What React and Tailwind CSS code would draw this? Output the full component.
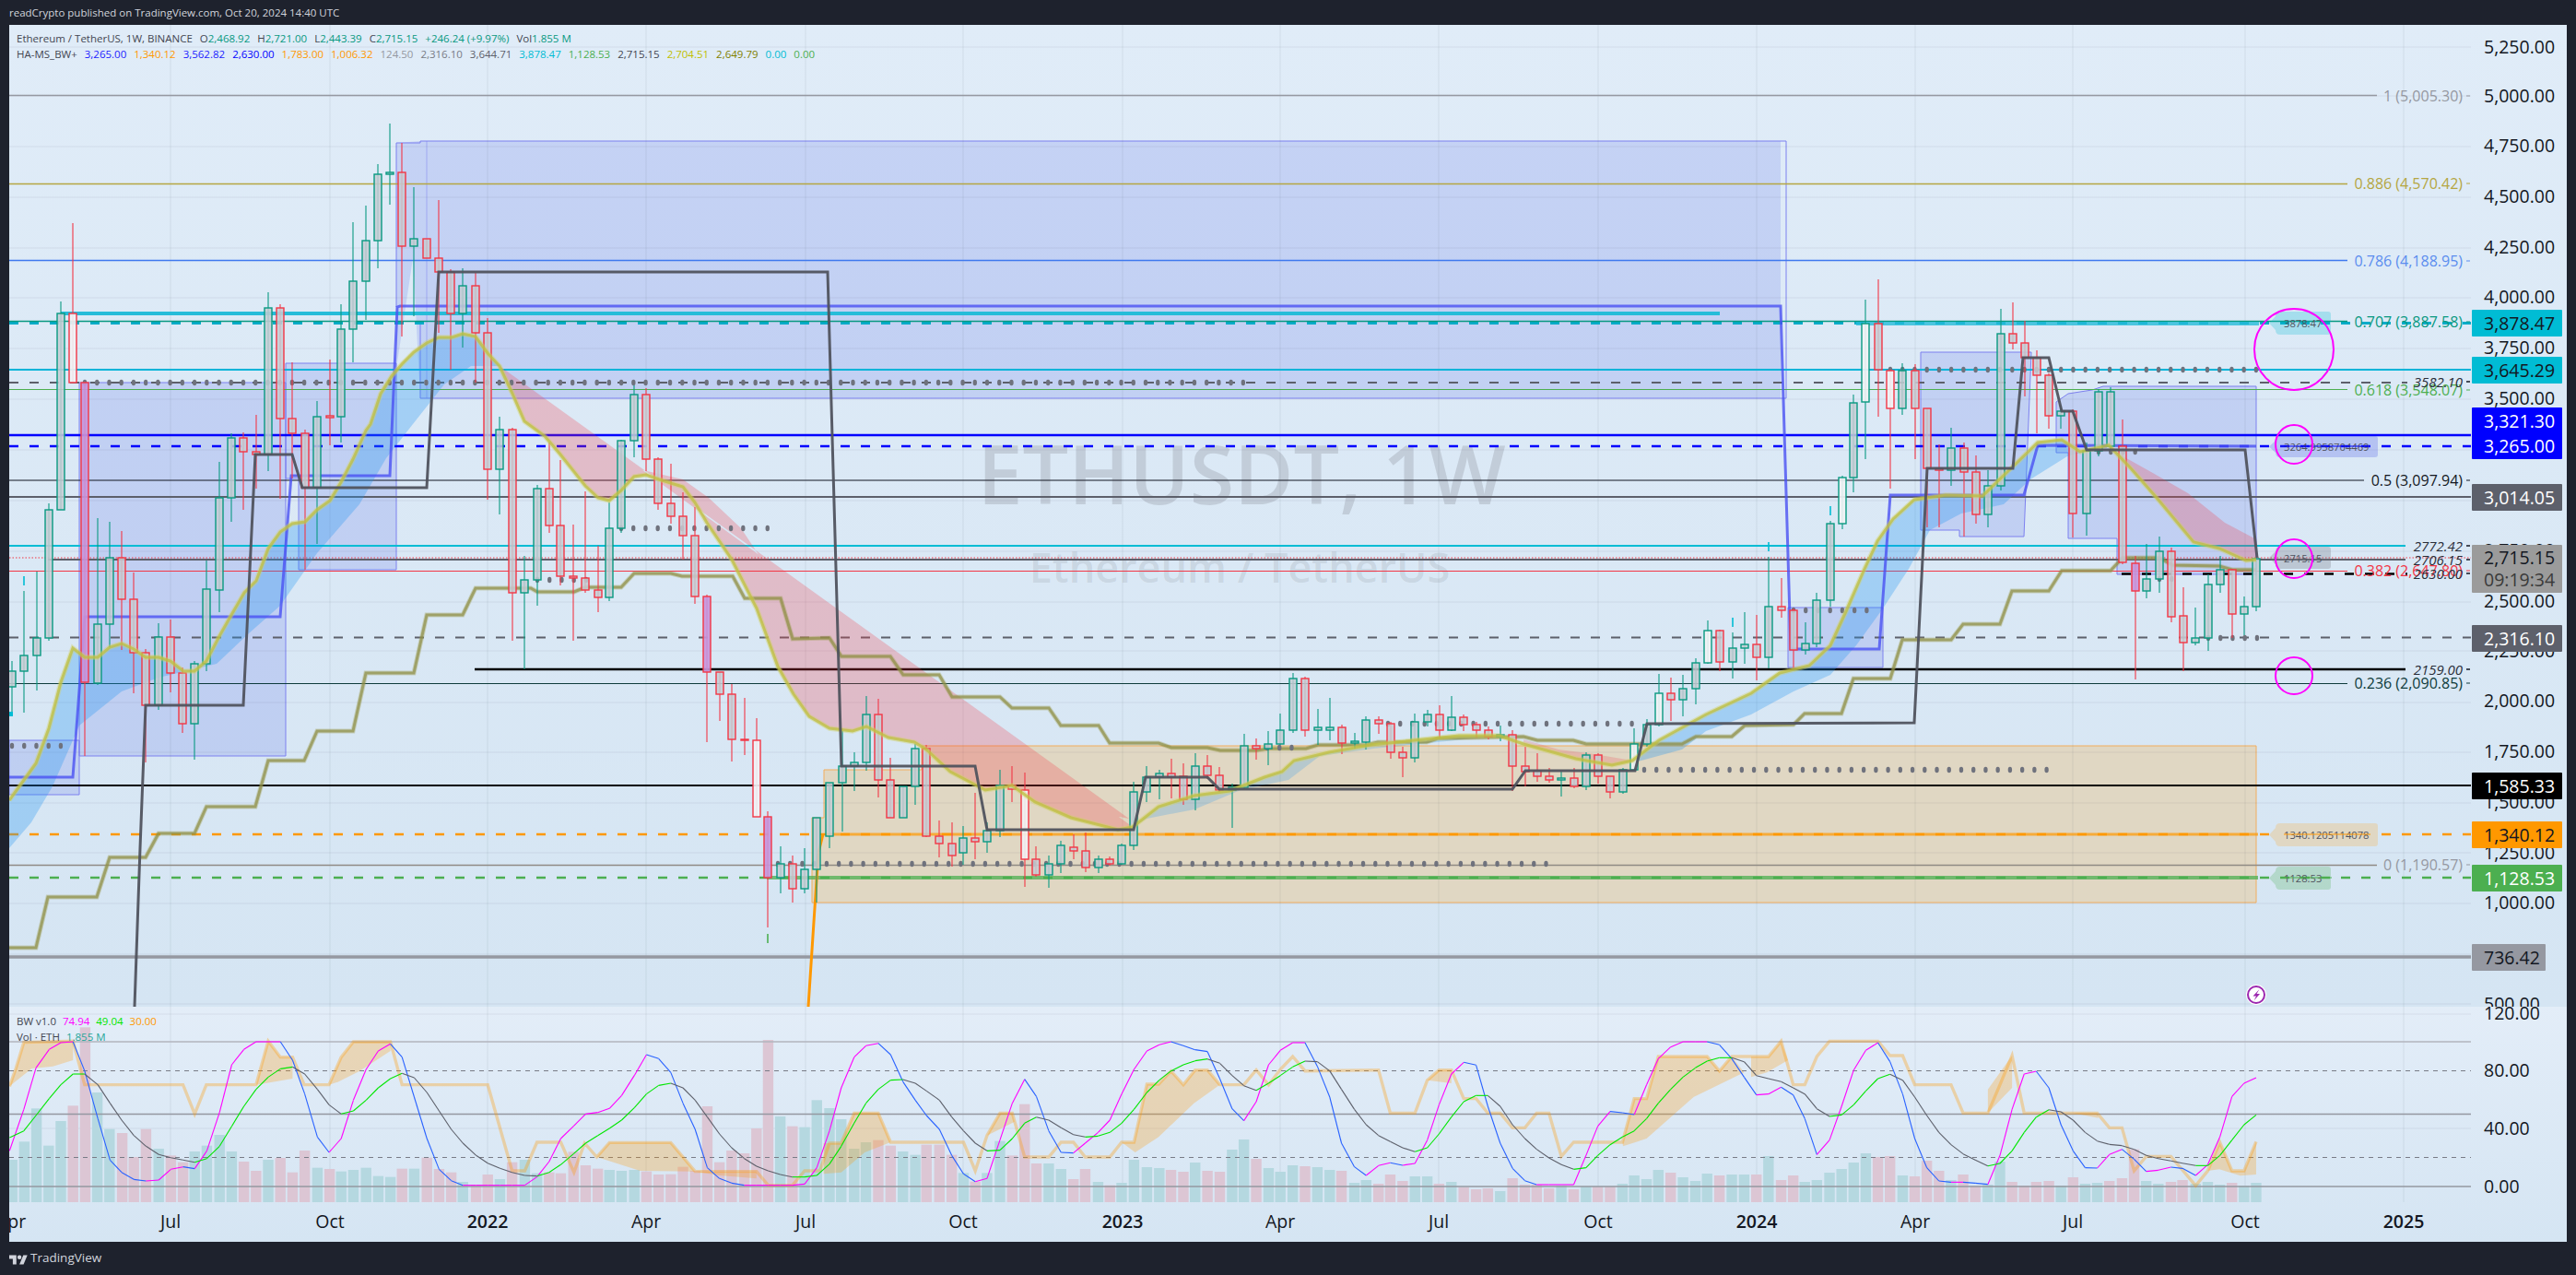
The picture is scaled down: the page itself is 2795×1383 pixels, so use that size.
import React from "react";

const pairs = (a) => { const o = []; for (let i = 0; i < a.length; i += 2) o.push([a[i], a[i + 1]]); return o; };
const z7 = (a) => pairs(a).map(([x, y]) => [x * 0.574, 920 + y / 3]);
const z8 = (a) => pairs(a).map(([x, y]) => [900 + x * 0.6378, 920 + y / 3]);
const z9 = (a) => pairs(a).map(([x, y]) => [1900 + x * 0.5708, 920 + y / 3]);
const P = (pts) => pts.map((p) => p.join(",")).join(" ");

// x, colour, bodyTop, bodyBottom, high, low, fill flag
const CANDLES = [
[13,"g",728,745,717,775],[26,"g",711,728,641,773],[40,"g",692,711,620,749],[53,"g",553,692,546,695],[66,"g",340,553,327,553],[79,"r",340,415,242,415,"w"],[92,"r",415,740,415,820,"p"],[106,"g",677,741,562,743],[119,"g",605,677,566,702],[132,"r",605,650,576,705],[145,"r",650,708,621,752],[158,"r",708,765,704,827],[172,"g",691,765,676,770],[185,"r",691,730,672,751],[198,"r",730,785,724,795],[211,"g",720,785,717,824],[224,"g",639,720,608,728],[238,"g",540,640,501,664],[251,"g",475,540,470,566],[264,"r",475,490,469,553],[278,"r",490,493,450,530],[291,"g",334,493,317,511],[304,"r",334,454,330,541],[317,"r",454,470,393,519],[331,"r",470,529,466,618],[344,"g",452,529,435,590],[358,"r",451,453,390,483],[370,"g",357,452,330,480],[383,"g",305,357,241,393],[397,"g",261,305,223,347],[410,"g",189,261,178,291],[423,"g",187,189,134,222],[436,"r",187,267,155,365],[449,"g",259,267,203,343],[463,"r",259,280,259,280],[476,"r",280,295,217,361],[489,"r",295,340,292,401],[502,"g",310,340,291,377],[516,"r",310,361,296,415],[529,"r",361,509,345,542],[542,"g",466,509,452,558],[556,"r",466,643,464,695],[569,"g",629,643,603,726],[583,"g",530,629,526,657],[596,"r",530,570,480,578],[608,"r",570,625,499,635],[622,"r",625,627,569,695],[635,"r",627,640,533,643],[649,"r",640,648,592,664],[661,"g",573,648,545,652],[674,"g",478,573,477,578],[688,"g",428,478,418,496],[701,"r",428,498,421,511],[714,"r",498,546,496,553],[728,"r",546,560,503,568],[741,"r",560,581,534,607],[754,"r",581,647,550,655],[767,"r",647,729,645,805,"p"],[781,"r",729,753,729,782],[794,"r",753,802,742,826],[808,"r",802,803,757,819],[821,"r",803,886,779,886,"w"],[833,"r",886,952,880,1006,"p"],[847,"g",937,952,918,969],[860,"r",937,964,928,979],[873,"g",943,964,920,969],[886,"g",887,943,887,979],[900,"g",849,907,849,920],[914,"g",831,849,793,902],[927,"g",827,831,816,858],[940,"g",775,827,755,836],[953,"r",775,846,758,865],[966,"r",846,887,822,887],[980,"g",853,887,853,887],[993,"g",812,853,807,873],[1005,"r",812,907,808,908],[1019,"r",907,915,890,930],[1033,"r",915,928,892,940],[1045,"g",909,925,896,938],[1058,"r",909,913,860,932],[1071,"g",901,913,892,925],[1085,"g",852,901,835,908],[1098,"r",852,856,831,870],[1112,"r",857,932,838,962,"w"],[1124,"r",932,949,918,951],[1138,"g",937,949,928,963],[1151,"g",917,937,912,947],[1165,"r",919,923,905,932],[1178,"r",923,941,903,946],[1192,"g",932,941,928,947],[1204,"r",932,937,929,939],[1217,"g",917,937,915,938],[1230,"g",859,917,848,922],[1244,"g",843,859,831,870],[1258,"g",839,843,835,867],[1271,"r",839,843,823,866],[1284,"r",842,867,828,873],[1297,"g",831,867,817,879],[1310,"r",831,841,819,845],[1323,"r",841,857,832,859],[1337,"g",854,857,850,898],[1350,"g",809,854,796,856],[1363,"r",809,812,801,824],[1376,"g",807,812,793,830],[1389,"g",792,807,774,808],[1403,"g",736,792,730,795],[1416,"r",736,792,734,799],[1430,"g",789,792,769,808],[1443,"g",789,792,757,803],[1456,"r",789,806,786,818],[1470,"g",804,806,795,812],[1482,"g",781,805,777,813],[1496,"r",781,785,777,796],[1509,"r",785,816,783,823],[1522,"r",816,822,810,843],[1535,"g",783,822,774,827],[1549,"g",775,783,770,788],[1562,"r",775,792,765,800],[1575,"g",778,792,755,793],[1588,"r",778,786,775,793],[1602,"r",786,792,783,800],[1615,"r",792,799,788,802],[1628,"g",797,799,787,804],[1641,"r",797,831,792,858],[1655,"r",831,837,810,853],[1668,"r",836,842,817,848],[1681,"r",842,846,833,849],[1694,"g",844,846,837,864],[1708,"r",844,853,833,855],[1721,"g",819,853,816,857],[1734,"r",819,842,817,850],[1747,"r",842,859,842,866],[1761,"g",835,859,833,861],[1773,"g",807,835,790,836,"w"],[1787,"g",786,807,780,810],[1800,"g",752,786,731,788,"w"],[1813,"r",752,759,735,782],[1826,"g",747,759,732,777],[1840,"g",719,747,714,764],[1853,"g",684,719,673,720,"w"],[1866,"r",684,718,683,728],[1880,"g",703,718,686,736],[1893,"g",699,703,664,720],[1906,"r",699,713,667,738],[1919,"g",658,713,604,725],[1933,"r",658,662,627,670],[1946,"r",662,705,660,725],[1959,"g",698,705,675,710],[1971,"g",651,698,643,702],[1986,"g",568,651,565,658],[1999,"g",518,568,516,574,"w"],[2011,"g",437,518,428,534],[2024,"g",351,436,325,498,"w"],[2038,"r",351,401,303,452],[2051,"r",402,443,402,530,"w"],[2064,"g",402,443,394,450],[2078,"r",402,443,395,498],[2091,"r",443,508,443,572],[2104,"r",508,510,482,572],[2117,"g",486,510,464,527],[2131,"r",486,512,480,582],[2144,"r",512,558,494,568],[2157,"g",527,558,510,572],[2171,"g",362,527,335,532],[2184,"r",362,372,328,379],[2197,"r",372,388,348,430],[2210,"r",388,407,380,470],[2223,"r",407,451,405,465],[2236,"g",446,451,440,465],[2249,"r",446,557,444,583],[2264,"g",489,557,480,581],[2277,"g",425,489,422,495],[2290,"g",425,484,420,487],[2303,"r",484,610,455,612],[2317,"r",611,641,603,737,"p"],[2329,"g",628,641,590,649],[2343,"g",598,628,582,643],[2356,"r",598,669,594,675],[2369,"r",668,697,637,728],[2382,"g",692,697,659,700],[2396,"g",634,692,623,706],[2409,"g",618,634,603,643],[2422,"r",618,666,617,692],[2435,"g",658,666,647,689],[2448,"g",606,658,606,663],
];

const YELLOW = [[10,868],[39,828],[53,790],[66,740],[79,703],[92,713],[106,713],[119,702],[132,698],[145,704],[158,713],[172,713],[185,717],[199,728],[211,728],[224,717],[238,690],[251,667],[265,643],[278,630],[291,595],[304,577],[317,568],[331,566],[344,553],[358,543],[370,523],[383,498],[397,467],[402,460],[413,427],[425,408],[436,395],[449,382],[463,372],[476,366],[490,366],[502,362],[516,365],[529,383],[542,397],[556,427],[569,457],[591,473],[608,493],[635,527],[649,540],[661,543],[674,532],[688,517],[701,515],[715,520],[741,528],[754,545],[767,567],[794,607],[821,660],[844,723],[861,753],[878,777],[900,790],[925,793],[940,788],[964,800],[992,805],[1005,813],[1031,837],[1069,857],[1098,852],[1123,870],[1162,887],[1213,900],[1229,897],[1257,875],[1296,863],[1334,858],[1372,843],[1391,837],[1404,825],[1442,816],[1487,808],[1544,802],[1583,798],[1627,798],[1653,807],[1710,823],[1749,830],[1771,825],[1800,803],[1851,775],[1900,752],[1931,730],[1963,722],[1986,700],[2003,663],[2023,617],[2037,587],[2054,563],[2077,542],[2111,537],[2151,538],[2183,507],[2211,480],[2237,477],[2257,490],[2288,483],[2311,507],[2340,540],[2380,588],[2408,595],[2437,608],[2448,607]];
const yBetween = (a, b) => YELLOW.filter(([x]) => x >= a && x <= b);

const OLIVE = [[10,1028],[39,1028],[52,973],[105,973],[119,930],[158,930],[172,904],[211,904],[224,875],[277,875],[291,825],[330,825],[344,793],[383,793],[397,730],[449,730],[463,667],[502,667],[516,638],[576,638],[583,642],[623,642],[635,637],[674,637],[688,622],[728,622],[740,625],[795,625],[808,649],[847,649],[860,693],[900,692],[913,712],[966,712],[980,732],[1019,732],[1033,756],[1085,756],[1098,768],[1138,768],[1151,787],[1192,787],[1204,806],[1257,806],[1271,811],[1310,811],[1324,814],[1363,814],[1377,812],[1417,812],[1430,808],[1482,808],[1495,805],[1548,805],[1560,801],[1653,799],[1668,803],[1707,803],[1721,807],[1825,807],[1840,799],[1879,799],[1893,787],[1946,786],[1958,774],[1998,774],[2011,736],[2051,736],[2064,694],[2117,694],[2130,677],[2170,677],[2183,641],[2223,641],[2237,619],[2290,619],[2303,605],[2343,605],[2357,613],[2408,614],[2422,618],[2448,618]];
const DARK = [[146,1092],[152,920],[158,765],[264,765],[277,493],[317,493],[328,529],[463,529],[476,295],[898,295],[913,831],[1058,831],[1071,900],[1230,900],[1243,843],[1310,843],[1323,856],[1641,856],[1655,836],[1774,836],[1787,785],[2077,784],[2091,508],[2184,508],[2195,388],[2223,388],[2237,446],[2249,446],[2264,488],[2436,488],[2449,605]];
const BLUESTEP = [[10,843],[79,843],[92,669],[304,669],[316,516],[423,516],[431,333],[434,332],[1932,332],[1943,704],[2039,704],[2051,537],[2196,537],[2211,483],[2448,484]];

const BLUEBAND1 = [...yBetween(10, 542), [511,397],[482,417],[448,460],[419,497],[390,547],[344,600],[304,657],[270,687],[235,720],[172,735],[132,750],[86,787],[57,853],[34,892],[10,920]];
const BLUEBAND2 = [...yBetween(1229, 1627),[1560,805],[1490,812],[1432,820],[1398,846],[1346,857],[1296,878],[1244,888]];
const BLUEBAND3 = [...yBetween(1771, 2288),[2243,495],[2203,520],[2174,547],[2128,557],[2094,575],[2071,617],[2043,660],[2014,700],[1986,732],[1946,750],[1900,775],[1851,793],[1825,813],[1773,827]];
const REDBAND1 = [...yBetween(542, 1229).reverse(),[1225,888],[1174,878],[1123,857],[1072,833],[1028,808],[977,780],[926,753],[900,723],[861,660],[832,615],[804,573],[769,540],[741,520],[689,508],[660,498],[623,460],[580,425],[542,397]];
const REDBAND2 = [...yBetween(1653, 1771),[1730,818],[1691,813],[1653,802]];
const REDBAND3 = [...yBetween(2288, 2448),[2448,585],[2414,567],[2374,535],[2334,512],[2300,493]];

const BOXES = [
  [[10,803],[86,803],[86,862],[10,862]],
  [[86,415],[310,415],[310,820],[86,820]],
  [[310,394],[430,394],[430,618],[324,618],[324,519],[310,519]],
  [[1940,659],[2043,659],[2043,724],[1940,724]],
  [[2084,382],[2204,382],[2196,582],[2126,582],[2126,575],[2084,575]],
  [[2231,436],[2244,427],[2270,423],[2282,419],[2448,419],[2448,623],[2297,623],[2297,584],[2244,584],[2244,491],[2231,491]],
];
const BIGBOX_FILL = [[430,155],[456,153],[1932,153],[1932,432],[456,432],[448,280],[430,400]];
const BIGBOX_EDGE = [[430,333],[430,155],[456,155],[456,153],[1938,153],[1938,432],[456,432],[456,350]];
const TAN = [[881,979],[881,887],[894,887],[894,835],[1000,835],[1000,809],[2448,809],[2448,979]];

const PRICES = [["5,250.00",51],["5,000.00",104],["4,750.00",158],["4,500.00",213],["4,250.00",268],["4,000.00",322],["3,750.00",377],["3,500.00",432],["3,250.00",488],["3,000.00",542],["2,750.00",597],["2,500.00",652],["2,250.00",706],["2,000.00",760],["1,750.00",815],["1,500.00",870],["1,250.00",925],["1,000.00",979],["750.00",1034],["500.00",1089]];
const GRID_Y = [51,104,159,214,269,323,378,433,488,543,598,653,706,762,816,871,925,980,1035,1089];
const GRID_X = [185,358,529,701,874,1045,1218,1389,1561,1734,1906,2078,2249,2436,2608];
const TAGS = [
  ["3,878.47",336,"bg-[#00bcd4]","text-[#131722]"],
  ["3,645.29",387,"bg-[#00bcd4]","text-[#131722]"],
  ["3,321.30",442,"bg-[#0000ff]","text-white"],
  ["3,265.00",469,"bg-[#0000ff]","text-white"],
  ["3,014.05",525,"bg-[#5d606b]","text-white"],
  ["2,316.10",678,"bg-[#5d606b]","text-white"],
  ["1,585.33",838,"bg-black","text-white"],
  ["1,340.12",891,"bg-[#ff9800]","text-[#131722]"],
  ["1,128.53",938,"bg-[#4caf50]","text-white"],
];
const TIMES = [["Apr",12,0],["Jul",185,0],["Oct",358,0],["2022",529,1],["Apr",701,0],["Jul",874,0],["Oct",1045,0],["2023",1218,1],["Apr",1389,0],["Jul",1561,0],["Oct",1734,0],["2024",1906,1],["Apr",2078,0],["Jul",2249,0],["Oct",2436,0],["2025",2608,1]];

const VOL7 = [23,1014,46,955,69,847,92,968,115,888,138,-838,161,-583,184,795,207,914,231,-927,253,-1005,276,-914,300,978,323,-1000,346,-1022,368,987,391,968,415,933,438,987,461,-1020,484,-1050,507,1014,530,-1008,553,-1055,576,-984,600,1040,623,-1044,645,1052,668,1047,692,1040,715,1067,738,1070,760,-1043,783,1043,807,-1007,830,-1044,853,-1055,875,1086,900,-1095,922,-1062,945,1077,968,-1022,992,1014,1015,1058,1038,-1055,1060,-1058,1084,-988,1107,-1032,1130,-1043,1152,1047,1175,1050,1199,1047,1222,-1052,1245,-1062,1268,-1061,1291,-1037,1314,-1050,1337,-840,1360,-1022,1383,-984,1407,-993,1430,-912,1452,-624,1475,873,1498,-905,1521,908,1544,820];
const VOL8 = [0,846,20,882,42,978,62,957,83,-950,104,-968,125,987,146,998,165,-965,187,-965,208,-998,228,1057,248,-1085,268,1057,290,953,311,-1000,332,-833,352,-1026,373,1026,394,1044,415,-1077,435,-1044,457,1086,477,-1097,497,1089,518,1014,540,1038,561,1041,581,-1047,602,-1053,622,1023,643,-1050,664,-1053,685,981,705,948,726,-1011,747,1041,767,1053,788,1032,809,-1035,830,1038,851,1047,871,-1050,893,1089,913,1080,934,-1092,954,-1062,975,-1083,996,1068,1017,1068,1037,-1092,1058,1086,1079,-1104,1100,-1110,1120,-1107,1141,1116,1162,-1074,1183,-1095,1203,-1095,1224,-1107,1245,1098,1266,-1110,1287,1101,1307,-1101,1328,-1101,1349,1092,1369,1065,1390,1077,1410,1047,1431,-1056,1452,1071,1473,1083,1493,1059,1514,-1065,1535,1062,1556,1062];
const VOL9 = [10,-1062,33,1002,57,-1080,80,-1065,102,1086,125,1080,149,1056,172,1044,195,1023,218,993,241,-1005,264,-1002,288,1065,311,-1068,334,-1017,357,-1050,380,1080,403,-1062,426,-1098,450,1095,473,1020,496,-1086,519,-1098,542,-1086,566,-1083,589,1098,612,-1071,635,1092,658,1089,681,-1083,705,-1074,728,-980,751,1083,774,1092,798,-1086,820,-1080,845,1092,868,1086,891,1095,914,-1089,937,1098,960,1089];

const KLINE = [
  ...z7([18,985,45,850,68,715,93,655,115,633,138,630,160,725,185,880,208,1015,230,1055,253,1078,276,1083,300,1080,323,1045,346,1037,368,1043,391,985,415,860,438,705,461,655,484,630,507,630,530,630,553,690,576,800,600,940,622,990,645,945,668,820,692,720,715,660,738,637,760,680,783,810,807,945,830,1045,853,1082,875,1097,900,1097,922,1097,945,1097,968,1097,992,1097,1015,1070,1038,1020,1060,945,1084,905,1107,865,1130,860,1152,847,1175,805,1199,740,1222,672,1245,685,1268,730,1291,830,1314,915,1337,1040,1360,1075,1383,1090,1407,1097,1430,1097,1452,1097,1475,1097,1498,1097,1521,1093,1544,1040]),
  ...z8([0,920,20,780,42,680,62,643,83,635,104,672,125,760,146,820,165,870,187,915,208,1000,228,1060,248,1085,268,1075,290,950,311,830,332,752,352,808,373,920,394,990,415,992,435,960,457,925,477,885,497,800,518,720,540,660,561,640,581,630,602,643,622,656,643,662,664,750,685,848,705,887,726,825,747,705,767,658,788,633,809,633,830,710,851,810,871,960,893,1037,913,1065,934,1033,954,1024,975,1032,996,1026,1017,950,1037,835,1058,735,1079,697,1100,706,1120,840,1141,960,1162,1042,1183,1082,1203,1095,1224,1095,1245,1095,1266,1095,1287,1000,1307,905,1328,857,1349,861,1369,867,1390,770,1410,685,1431,647,1452,630,1473,630,1493,630,1514,640,1535,685,1556,745]),
  ...z9([10,803,33,800,57,778,80,803,102,880,125,997,149,950,172,840,195,722,218,658,241,633,264,695,288,800,311,945,334,1040,357,1083,380,1087,403,1087,426,1090,450,1094,473,1000,496,850,519,735,542,726,566,780,589,900,612,985,635,1040,658,1041,681,997,705,980,728,1012,751,1052,774,1048,798,1038,820,1042,845,1065,868,1030,891,940,914,808,937,765,960,747]),
];
const DLINE = [
  ...z7([18,942,45,920,68,870,93,815,115,770,138,735,160,735,185,770,208,830,230,885,253,935,276,970,300,997,323,1007,346,1015,368,1022,391,1010,415,970,438,905,461,840,484,785,507,745,530,718,553,712,576,735,600,785,622,835,645,865,668,855,692,820,715,780,738,750,760,733,783,747,807,795,830,855,853,915,875,960,900,1000,922,1025,945,1042,968,1055,992,1065,1015,1067,1038,1055,1060,1030,1084,995,1107,960,1130,935,1152,912,1175,885,1199,845,1222,800,1245,772,1268,765,1291,780,1314,820,1337,875,1360,930,1383,975,1407,1010,1430,1035,1452,1050,1475,1062,1498,1070,1521,1070,1544,1065]),
  ...z8([0,1028,20,970,42,895,62,830,83,785,104,755,125,753,146,765,165,790,187,820,208,875,228,920,248,960,268,985,290,983,311,945,332,895,352,875,373,885,394,910,415,932,435,940,457,937,477,925,497,895,518,850,540,795,561,755,581,725,602,705,622,692,643,686,664,700,685,740,705,773,726,788,747,765,767,740,788,712,809,693,830,695,851,725,871,785,893,850,913,900,934,935,954,955,975,975,996,988,1017,975,1037,930,1058,875,1079,825,1100,805,1120,805,1141,840,1162,900,1183,945,1203,980,1224,1008,1245,1030,1266,1045,1287,1040,1307,1000,1328,965,1349,940,1369,920,1390,880,1410,830,1431,785,1452,745,1473,715,1493,693,1514,682,1535,682,1556,695]),
  ...z9([10,740,33,750,57,760,80,780,102,800,125,848,149,873,172,868,195,835,218,790,241,750,264,736,288,755,311,810,334,870,357,925,380,965,403,995,426,1015,450,1034,473,1026,496,985,519,925,542,875,566,851,589,858,612,885,635,925,658,953,681,964,705,968,728,980,751,1000,774,1010,798,1018,820,1025,845,1033,868,1033,891,1000,914,950,937,900,960,868]),
];
const ORANGE = [
  ...z7([18,775,30,717,45,632,138,628,160,770,346,770,368,865,390,770,484,770,507,628,530,680,553,680,575,770,622,770,645,680,668,630,738,630,760,770,922,770,968,1050,992,1050,1015,957,1060,957,1085,1055,1105,960,1128,1005,1152,958,1268,958,1314,1052,1430,1052,1452,1097,1498,1097,1521,1050,1550,1050]),
  ...z8([0,960,20,960,42,862,83,862,104,957,228,957,248,1050,268,935,290,862,311,862,332,1005,373,1005,394,957,415,957,435,1005,477,1005,497,957,518,957,540,768,560,768,581,725,602,770,622,722,643,722,664,770,705,770,726,722,747,770,767,720,788,678,809,725,934,722,954,862,996,862,1017,755,1037,722,1058,722,1079,815,1100,815,1120,862,1141,862,1162,910,1183,910,1203,862,1224,862,1245,1003,1266,957,1349,957,1369,815,1390,815,1410,678,1493,678,1514,725,1535,678]),
  ...z9([0,678,33,678,57,628,80,770,102,770,125,678,149,628,241,628,264,675,288,675,311,770,380,770,403,862,450,862,473,770,496,675,519,862,658,862,681,910,705,910,728,1050,751,1003,798,1003,845,1098,868,1050,891,957,914,1050,937,1050,960,955]),
];
const AREAS = [
  z7([18,775,30,717,45,632,138,628,138,690,100,710,60,717]),
  z7([484,770,507,628,530,680,553,680,553,750]),
  z7([622,770,645,680,668,630,738,630,738,660,680,725,640,760]),
  z7([1128,1005,1152,958,1268,958,1314,1052,1210,1050]),
  z7([1314,1052,1430,1052,1430,1075,1360,1065]),
  z8([-10,960,20,960,42,862,83,862,104,957,60,990,20,1055,-10,1060]),
  z8([268,935,290,862,311,862,315,890]),
  z8([497,957,518,957,540,768,560,768,581,725,602,770,622,722,643,722,664,770,620,830,560,940,520,990]),
  z8([1017,755,1037,722,1058,722,1058,765]),
  z8([1349,957,1369,815,1390,815,1410,678,1493,678,1514,725,1535,678,1556,730,1470,810,1390,945,1350,970]),
  z9([0,678,33,678,57,628,70,690,30,730,0,745]),
  z9([450,862,450,785,496,675,496,780]),
  z9([612,862,658,862,660,878]),
  z9([868,1050,891,957,914,1050,937,1050,960,955,960,1062,930,1066,890,1045]),
];

const Segs = ({ pts, up, down, width = 1.1 }) =>
  pts.slice(1).map((p, i) => (
    <line key={i} x1={pts[i][0]} y1={pts[i][1]} x2={p[0]} y2={p[1]} stroke={p[1] <= pts[i][1] ? up : down} strokeWidth={width} />
  ));

const Dots = ({ a, b, y }) => {
  const out = [];
  for (let x = a; x <= b; x += 13.23) out.push(<ellipse key={x} cx={x} cy={y} rx="2.2" ry="3.2" fill="#6f727d" />);
  return out;
};

const HL = ({ y, a = 10, b = 2681, c, w = 1, d, o = 1 }) => <line x1={a} x2={b} y1={y} y2={y} stroke={c} strokeWidth={w} strokeDasharray={d} strokeOpacity={o} />;

const Candle = ({ d }) => {
  const [x, c, t, b, hi, lo, f] = d;
  const col = c === "g" ? "#089981" : "#f23645";
  const fill = f === "p" ? "#c695dc" : f === "w" ? "#f1f3f5" : "#c6cdd4";
  return (
    <g>
      <line x1={x} x2={x} y1={hi} y2={lo} stroke={col} strokeWidth="1.1" />
      <rect x={x - 4} y={t} width="8" height={Math.max(b - t, 1)} fill={fill} fillOpacity={f ? 0.9 : 0.85} stroke={col} strokeWidth="1.4" />
    </g>
  );
};

const Bubble = ({ x2, y1, y2, fill, o = 0.25, label }) => {
  const m = (y1 + y2) / 2;
  return (
    <g>
      <path d={`M2462 ${m} L2469 ${y1 + 5} Q2469 ${y1} 2474 ${y1} L${x2 - 3} ${y1} Q${x2} ${y1} ${x2} ${y1 + 3} L${x2} ${y2 - 3} Q${x2} ${y2} ${x2 - 3} ${y2} L2474 ${y2} Q2469 ${y2} 2469 ${y2 - 5} Z`} fill={fill} fillOpacity={o} />
      <text x="2478" y={m} fontSize="11.2" fill="#50535e" dominantBaseline="central">{label}</text>
    </g>
  );
};

const Fib = ({ y, label, c, right = 2672 }) => (
  <g>
    <text x={right} y={y} fontSize="16" fill={c} textAnchor="end" dominantBaseline="central">{label}</text>
    <line x1="2676" x2="2680" y1={y} y2={y} stroke={c} strokeWidth="1" />
  </g>
);
const Lvl = ({ y, label }) => (
  <g>
    <text x="2672" y={y} fontSize="15" fontStyle="italic" fill="#2a2e39" textAnchor="end" dominantBaseline="central">{label}</text>
    <line x1="2676" x2="2680" y1={y} y2={y} stroke="#131722" strokeWidth="1.5" />
  </g>
);

const Val = ({ c, children }) => <span className={c}>{children}</span>;

function PriceSvg() {
  return (
    <svg viewBox="10 27 2671 1065" className="absolute inset-0 w-full h-full font-['Open_Sans',sans-serif]">
      <text x="1347" y="547" fontSize="88" fontWeight="600" fill="#5d606b" fillOpacity="0.2" textAnchor="middle">ETHUSDT, 1W</text>
      <text x="1345" y="632" fontSize="45" fontWeight="600" fill="#5d606b" fillOpacity="0.15" textAnchor="middle">Ethereum / TetherUS</text>

      <polygon points={P(TAN)} fill="#e0d7c3" stroke="#f2ad5c" strokeWidth="1" />
      <polygon points={P(BIGBOX_FILL)} fill="#3f51e6" fillOpacity="0.16" />
      <polyline points={P(BIGBOX_EDGE)} fill="none" stroke="#7d80ef" strokeWidth="1" />
      <line x1="463" x2="463" y1="153" y2="432" stroke="#7d80ef" strokeOpacity="0.5" strokeWidth="1" />
      {BOXES.map((b, i) => <polygon key={i} points={P(b)} fill="#3f51e6" fillOpacity="0.16" stroke="#7d80ef" strokeWidth="1" />)}
      {GRID_Y.map((y) => <line key={y} x1="10" x2="2681" y1={y} y2={y} stroke="#2a2e39" strokeOpacity="0.07" strokeWidth="1.2" />)}
      {GRID_X.map((x) => <line key={x} x1={x} x2={x} y1="27" y2="1092" stroke="#2a2e39" strokeOpacity="0.08" strokeWidth="1" />)}

      <HL y={103.5} b={2579} c="#9598a1" w={1.5} />
      <HL y={199.5} b={2547} c="#b5a642" w={1.3} />
      <HL y={282.5} b={2547} c="#3f79ee" w={1.3} />
      <HL y={350.5} c="#00acc8" w={3} d="10 12" />
      <HL y={348.5} b={2547} c="#089981" w={1.3} />
      <HL y={340} a={66} b={1866} c="#26bcd9" w={4} />
      <HL y={351} a={2014} b={2451} c="#26bcd9" w={4} o={0.8} />
      <HL y={401} c="#00b4d8" w={2} />
      <HL y={415} a={10} b={2612} c="#5d606b" w={2.2} d="10 12" />
      <HL y={422.5} b={2547} c="#4caf50" w={1.2} />
      <HL y={472} c="#0000ff" w={2.4} />
      <HL y={484} c="#0000ff" w={2.6} d="10 12" />
      <HL y={521} b={2565} c="#131722" w={1.2} />
      <HL y={539} c="#5d606b" w={2.2} />
      <HL y={592} b={2610} c="#00bcd4" w={2.2} />
      <HL y={605} c="#f23645" w={1} d="1.5 2" />
      <HL y={607} a={52} b={2610} c="#5d606b" w={2.2} />
      <HL y={619.5} b={2547} c="#f23645" w={1.2} />
      <HL y={622.5} a={2302} b={2612} c="#000000" w={2.4} d="10 12" />
      <HL y={691.5} c="#5d606b" w={2.2} d="10 12" />
      <HL y={726} a={515} b={2610} c="#000000" w={2.4} />
      <HL y={741.5} b={2547} c="#0d3b3b" w={1.2} />
      <HL y={852} c="#000000" w={2.2} />
      <HL y={905} c="#ff9800" w={2.4} d="10 12" />
      <HL y={905} a={900} b={2450} c="#ff9800" w={3} o={0.7} />
      <HL y={938.5} b={2579} c="#8f8a84" w={1.3} />
      <HL y={952} c="#4caf50" w={2.4} d="10 12" />
      <HL y={952} a={832} b={2450} c="#4caf50" w={4} o={0.75} />
      <HL y={1038} c="#9598a1" w={3.4} />

      <polygon points={P(BLUEBAND1)} fill="#2196f3" fillOpacity="0.3" />
      <polygon points={P(BLUEBAND2)} fill="#2196f3" fillOpacity="0.22" />
      <polygon points={P(BLUEBAND3)} fill="#2196f3" fillOpacity="0.3" />
      <polygon points={P(REDBAND1)} fill="#f23645" fillOpacity="0.25" />
      <polygon points={P(REDBAND2)} fill="#f23645" fillOpacity="0.2" />
      <polygon points={P(REDBAND3)} fill="#f23645" fillOpacity="0.25" />

      <polyline points={P(OLIVE)} fill="none" stroke="#9d9d50" strokeOpacity="0.35" strokeWidth="5" />
      <polyline points={P(OLIVE)} fill="none" stroke="#8e8e45" strokeOpacity="0.7" strokeWidth="3" />
      <polyline points={P([[877,1092],[883,1000],[888,925],[893,905]])} fill="none" stroke="#ff9800" strokeWidth="3" />
      <polyline points={P(BLUESTEP)} fill="none" stroke="#4a50f2" strokeOpacity="0.8" strokeWidth="3" />

      <Dots a={92} b={1350} y={415} />
      <Dots a={674} b={833} y={573} />
      <Dots a={583} b={649} y={629} />
      <Dots a={13} b={66} y={809} />
      <Dots a={1506} b={1775} y={785} />
      <Dots a={1375} b={1404} y={811} />
      <Dots a={1784} b={2224} y={835} />
      <Dots a={844} b={1682} y={937} />
      <Dots a={2051} b={2451} y={401} />
      <Dots a={1946} b={2026} y={662} />
      <Dots a={2277} b={2317} y={490} />
      <Dots a={2343} b={2369} y={628} />
      <Dots a={2396} b={2449} y={692} />

      {CANDLES.map((d) => <Candle key={d[0]} d={d} />)}

      <polyline points={P(YELLOW)} fill="none" stroke="#d2d26a" strokeOpacity="0.4" strokeWidth="5.5" />
      <polyline points={P(YELLOW)} fill="none" stroke="#bfbf3f" strokeOpacity="0.75" strokeWidth="3" />
      <polyline points={P(DARK)} fill="none" stroke="#50535e" strokeOpacity="0.95" strokeWidth="3" />

      {[[26,625,635],[1986,549,559],[1919,588,598],[1880,670,680]].map(([x, a, b]) => <line key={x} x1={x} x2={x} y1={a} y2={b} stroke="#00bcd4" strokeWidth="1.6" />)}
      <line x1="833" x2="833" y1="1013" y2="1023" stroke="#4caf50" strokeWidth="1.6" />
      <rect x="10" y="772" width="4" height="5" fill="#00bcd4" />

      <Bubble x2={2529} y1={338} y2={363} fill="#00bcd4" label="3878.47" />
      <Bubble x2={2580} y1={473} y2={496} fill="#3f51e6" label="3264.9958704469" />
      <Bubble x2={2529} y1={593} y2={617} fill="#787b86" o={0.3} label="2715.15" />
      <Bubble x2={2580} y1={893} y2={918} fill="#e0d7c3" o={1} label="1340.1205114078" />
      <Bubble x2={2529} y1={940} y2={965} fill="#4caf50" label="1128.53" />

      <line x1="2478" x2="2572" y1="484" y2="484" stroke="#0000ff" strokeWidth="1.2" />
      <line x1="2478" x2="2572" y1="905" y2="905" stroke="#ff9800" strokeWidth="1.2" />
      <line x1="2478" x2="2530" y1="952" y2="952" stroke="#4caf50" strokeWidth="1.2" />

      <ellipse cx="2489" cy="379" rx="43" ry="44" fill="none" stroke="#ff00ff" strokeWidth="2" />
      <ellipse cx="2489" cy="482" rx="20" ry="21" fill="none" stroke="#ff00ff" strokeWidth="2" />
      <ellipse cx="2489" cy="606" rx="20" ry="21" fill="none" stroke="#ff00ff" strokeWidth="2" />
      <ellipse cx="2489" cy="733" rx="20" ry="20" fill="none" stroke="#ff00ff" strokeWidth="2" />

      <Fib y={104} label="1 (5,005.30)" c="#9598a1" />
      <Fib y={199} label="0.886 (4,570.42)" c="#b5a642" />
      <Fib y={283} label="0.786 (4,188.95)" c="#5b8def" />
      <Fib y={349} label="0.707 (3,887.58)" c="#089981" />
      <Fib y={423} label="0.618 (3,548.07)" c="#4caf50" />
      <Fib y={521} label="0.5 (3,097.94)" c="#131722" />
      <Fib y={619} label="0.382 (2,647.80)" c="#f23645" />
      <Fib y={741} label="0.236 (2,090.85)" c="#0d3b3b" />
      <Fib y={938} label="0 (1,190.57)" c="#9598a1" />
      <Lvl y={414} label="3582.10" />
      <Lvl y={592} label="2772.42" />
      <Lvl y={607} label="2706.15" />
      <Lvl y={622} label="2630.00" />
      <Lvl y={726} label="2159.00" />

      <circle cx="2448" cy="1079" r="11" fill="#ffffff" />
      <circle cx="2448" cy="1079" r="9" fill="none" stroke="#9c27b0" strokeWidth="2" />
      <path d="M2451.5 1073 L2444.5 1080.5 L2448 1080.5 L2445.5 1085.5 L2452 1078 L2448.5 1078 Z" fill="#9c27b0" />
    </svg>
  );
}

function VolBars({ data, xf }) {
  const out = [];
  for (let i = 0; i < data.length; i += 2) {
    const v = data[i + 1];
    const top = 920 + Math.abs(v) / 3;
    out.push(<rect key={i} x={xf(data[i]) - 5.7} y={top} width="11.4" height={1304 - top} fill={v < 0 ? "#dcc6d4" : "#b5d8e0"} />);
  }
  return out;
}

function OscSvg() {
  return (
    <svg viewBox="10 1092 2671 212" className="absolute inset-0 w-full h-full">
      {[1100, 1224].map((y) => <line key={y} x1="10" x2="2681" y1={y} y2={y} stroke="#2a2e39" strokeOpacity="0.07" strokeWidth="1.2" />)}
      {GRID_X.map((x) => <line key={x} x1={x} x2={x} y1="1092" y2="1304" stroke="#2a2e39" strokeOpacity="0.08" strokeWidth="1" />)}
      <VolBars data={VOL7} xf={(x) => x * 0.574} />
      <VolBars data={VOL8} xf={(x) => 900 + x * 0.6378} />
      <VolBars data={VOL9} xf={(x) => 1900 + x * 0.5708} />
      <HL y={1130} c="#b2b5be" w={1.3} />
      <HL y={1161.5} c="#787b86" w={1.2} d="5 5" />
      <HL y={1208.5} c="#9598a1" w={1.3} />
      <HL y={1255.5} c="#787b86" w={1.2} d="5 5" />
      <HL y={1287} c="#9598a1" w={1.3} />
      {AREAS.map((a, i) => <polygon key={i} points={P(a)} fill="#ff9800" fillOpacity="0.26" />)}
      <polyline points={P(ORANGE)} fill="none" stroke="#ff9800" strokeOpacity="0.32" strokeWidth="3.4" />
      <Segs pts={KLINE} up="#ff00ff" down="#2962ff" />
      <Segs pts={DLINE} up="#00e600" down="#5d606b" />
    </svg>
  );
}

export default function App() {
  return (
    <div className="w-[2795px] h-[1383px] bg-[#1e222d] flex flex-col overflow-hidden font-['Open_Sans',sans-serif]">
      <header className="h-[27px] shrink-0 flex items-center pl-[10px] text-[11.5px] text-[#d1d4dc]">
        readCrypto published on TradingView.com, Oct 20, 2024 14:40 UTC
      </header>

      <main className="h-[1320px] shrink-0 ml-[10px] mr-[10px] flex flex-col">
        <section className="h-[1065px] flex bg-linear-to-b from-[#e0ecf8] to-[#d5e5f3]">
          <div className="relative w-[2671px]">
            <PriceSvg />
            <div className="absolute left-[8px] top-[6px] flex flex-col text-[11.5px] leading-[17px] text-[#434651]">
              <div className="flex gap-[8px]">
                <span>Ethereum / TetherUS, 1W, BINANCE</span>
                <span>O<Val c="text-[#089981]">2,468.92</Val></span>
                <span>H<Val c="text-[#089981]">2,721.00</Val></span>
                <span>L<Val c="text-[#089981]">2,443.39</Val></span>
                <span>C<Val c="text-[#089981]">2,715.15</Val></span>
                <Val c="text-[#089981]">+246.24 (+9.97%)</Val>
                <span>Vol<Val c="text-[#089981]">1.855 M</Val></span>
              </div>
              <div className="flex gap-[8px]">
                <span>HA-MS_BW+</span>
                <Val c="text-[#2222ff]">3,265.00</Val>
                <Val c="text-[#ff9800]">1,340.12</Val>
                <Val c="text-[#2222ff]">3,562.82</Val>
                <Val c="text-[#0000ff]">2,630.00</Val>
                <Val c="text-[#ff9800]">1,783.00</Val>
                <Val c="text-[#ff9800]">1,006.32</Val>
                <Val c="text-[#9598a1]">124.50</Val>
                <Val c="text-[#787b86]">2,316.10</Val>
                <Val c="text-[#5d606b]">3,644.71</Val>
                <Val c="text-[#00bcd4]">3,878.47</Val>
                <Val c="text-[#4caf50]">1,128.53</Val>
                <Val c="text-[#434651]">2,715.15</Val>
                <Val c="text-[#bfbf00]">2,704.51</Val>
                <Val c="text-[#808000]">2,649.79</Val>
                <Val c="text-[#00bcd4]">0.00</Val>
                <Val c="text-[#4caf50]">0.00</Val>
              </div>
            </div>
          </div>
          <div className="relative w-[104px] overflow-hidden text-[19.5px] leading-[26px] text-[#131722]">
            {PRICES.map(([t, y]) => (
              <span key={t} className="absolute left-[14px] -translate-y-1/2" style={{ top: y - 27 }}>{t}</span>
            ))}
            {TAGS.map(([t, y, bg, fg]) => (
              <div key={t} className={`absolute left-[1px] w-[98px] h-[29px] pl-[13px] flex items-center rounded-[1px] ${bg} ${fg}`} style={{ top: y - 27 }}>{t}</div>
            ))}
            <div className="absolute left-[1px] top-[564px] w-[98px] h-[52px] pl-[13px] flex flex-col justify-center rounded-[1px] bg-[#9b9b9b] text-[#131722]">
              <span className="leading-[24px]">2,715.15</span>
              <span className="leading-[24px] text-[#3a3a3a]">09:19:34</span>
            </div>
            <div className="absolute left-[1px] top-[997px] w-[80px] h-[29px] pl-[13px] flex items-center rounded-[1px] bg-[#9598a1] text-[#131722]">736.42</div>
          </div>
        </section>

        <section className="flex-1 flex flex-col bg-linear-to-b from-[#e3edf8] to-[#d5e5f3]">
          <div className="h-[212px] flex">
            <div className="relative w-[2671px]">
              <OscSvg />
              <div className="absolute left-[8px] top-[7px] flex flex-col text-[11.5px] leading-[17px] text-[#434651]">
                <div className="flex gap-[7px]">
                  <span>BW v1.0</span>
                  <Val c="text-[#ff00ff]">74.94</Val>
                  <Val c="text-[#00e600]">49.04</Val>
                  <Val c="text-[#ff9800]">30.00</Val>
                </div>
                <div className="flex gap-[7px]">
                  <span>Vol · ETH</span>
                  <Val c="text-[#26a69a]">1.855 M</Val>
                </div>
              </div>
            </div>
            <div className="relative w-[104px] overflow-hidden text-[19.5px] leading-[26px] text-[#131722]">
              {[["120.00", 1099], ["80.00", 1161], ["40.00", 1224], ["0.00", 1287]].map(([t, y]) => (
                <span key={t} className="absolute left-[14px] -translate-y-1/2" style={{ top: y - 1092 }}>{t}</span>
              ))}
            </div>
          </div>
          <div className="relative flex-1 overflow-hidden text-[19.5px] text-[#131722]">
            {TIMES.map(([t, x, b]) => (
              <span key={x} className={`absolute top-[7px] -translate-x-1/2 leading-[28px] ${b ? "font-semibold" : "font-normal"}`} style={{ left: x - 10 }}>{t}</span>
            ))}
          </div>
        </section>
      </main>

      <footer className="flex-1 flex items-center gap-[3px] pl-[10px] text-[#d1d4dc]">
        <svg viewBox="0 0 36 22" className="w-[20px] h-[13px]" fill="#d1d4dc">
          <path d="M14 22H7V11H0V4h14v18zM28 22h-8l7.5-18h8L28 22z" />
          <circle cx="20" cy="8" r="4" />
        </svg>
        <span className="text-[13.5px] leading-none">TradingView</span>
      </footer>
    </div>
  );
}
